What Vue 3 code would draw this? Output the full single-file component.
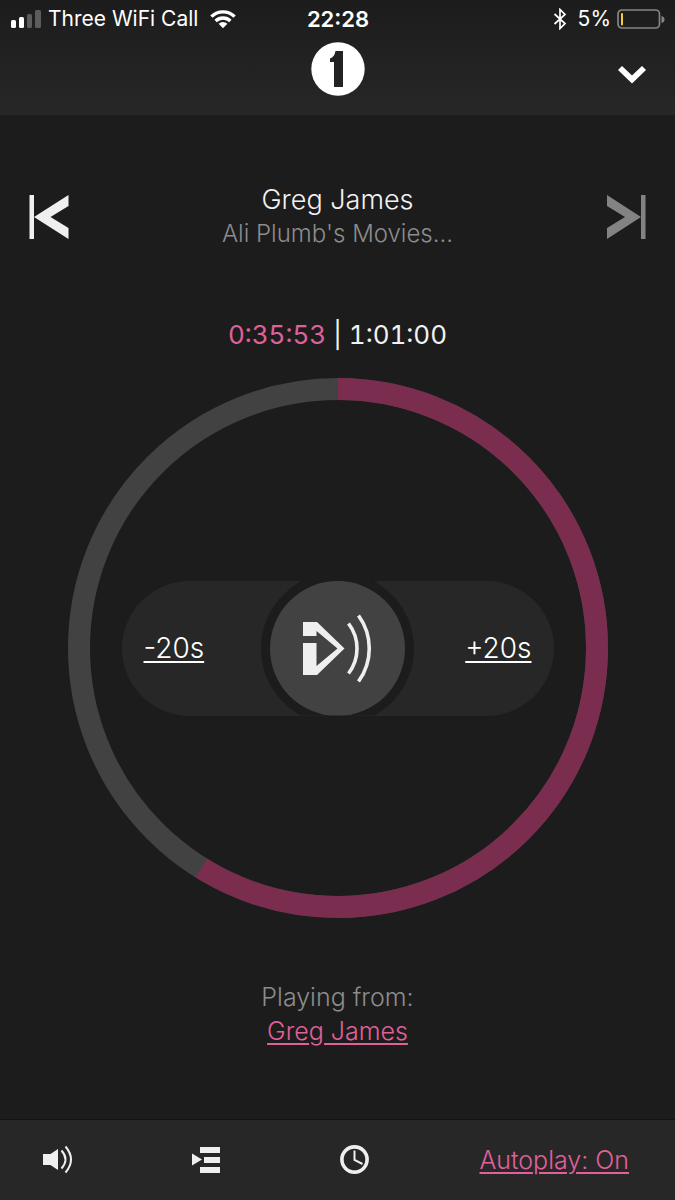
<script setup>
import { ref, computed } from 'vue'

const elapsed = ref(35 * 60 + 53)
const duration = ref(61 * 60)
const autoplay = ref(true)

const format = (t) => {
  const pad = (n) => String(n).padStart(2, '0')
  return `${Math.floor(t / 3600)}:${pad(Math.floor(t / 60) % 60)}:${pad(t % 60)}`
}
const radius = 259
const circumference = 2 * Math.PI * radius
const dash = computed(() => `${(circumference * elapsed.value) / duration.value} ${circumference}`)
const skip = (s) => {
  elapsed.value = Math.min(duration.value, Math.max(0, elapsed.value + s))
}
</script>

<template>
  <div class="player">
    <header class="top">
      <div class="status">
        <div class="status-left">
          <svg class="signal" viewBox="0 0 30 20" aria-hidden="true">
            <rect x="0" y="11" width="5" height="8" rx="1.5" fill="#fff" />
            <rect x="8" y="8" width="5" height="11" rx="1.5" fill="#fff" />
            <rect x="16" y="5" width="5" height="14" rx="1.5" fill="#5c5c5c" />
            <rect x="24" y="1" width="6" height="18" rx="1.5" fill="#5c5c5c" />
          </svg>
          <span>Three WiFi Call</span>
          <svg class="wifi" viewBox="0 0 26 20" aria-hidden="true">
            <g fill="none" stroke="#fff" stroke-width="3.4">
              <path d="M1.4 7.6a16.6 16.6 0 0 1 23.2 0" />
              <path d="M5.6 12a10.6 10.6 0 0 1 14.8 0" />
            </g>
            <path d="M8.6 14.8a6.2 6.2 0 0 1 8.8 0L13 19.2z" fill="#fff" />
          </svg>
        </div>
        <time class="clock">22:28</time>
        <div class="status-right">
          <svg class="bluetooth" viewBox="0 0 14 22" aria-hidden="true">
            <path d="M1.5 6 12 15.5 7 20.500V1.500L12 6.500 1.500 16" fill="none" stroke="#fff" stroke-width="1.7" />
          </svg>
          <span>5%</span>
          <svg class="battery" viewBox="0 0 48 20" aria-hidden="true">
            <rect x="1" y="1" width="41.500" height="18" rx="4" fill="none" stroke="#858585" stroke-width="1.7" />
            <path d="M44.500 7q3 1 3 3.500t-3 3.500z" fill="#858585" />
            <rect x="4" y="4" width="2" height="12.500" rx="1" fill="#f7cb3b" />
          </svg>
        </div>
      </div>
      <div class="brand">
        <svg class="logo" viewBox="0 0 54 54" role="img" aria-label="Radio station logo">
          <circle cx="27" cy="27" r="26.700" fill="#fff" />
          <path d="M24.500 9h7.500v36h-9V20h-4v-3.500q4.500-1.500 5.500-7.500z" fill="#232323" />
        </svg>
        <button class="collapse" type="button" aria-label="Close player">
          <svg viewBox="0 0 28 18" aria-hidden="true">
            <path d="M0 4 4 0 14 9.500 24 0 28 4 14 17.500z" fill="#fff" />
          </svg>
        </button>
      </div>
    </header>

    <main class="content">
      <section class="track">
        <button class="step" type="button" aria-label="Previous">
          <svg viewBox="0 0 40 44" aria-hidden="true">
            <path d="M.5 0H5v44H.500zM5 22 39.500 0v11L21.500 22 39.500 33v11z" fill="#efefef" />
          </svg>
        </button>
        <div class="titles">
          <h1>Greg James</h1>
          <p>Ali Plumb's Movies...</p>
        </div>
        <button class="step" type="button" aria-label="Next">
          <svg viewBox="0 0 40 44" aria-hidden="true">
            <path d="M39.500 0H35v44h4.500zM35 22 1 0v11l18 11L1 33v11z" fill="#838383" />
          </svg>
        </button>
      </section>

      <p class="times"><span class="elapsed">{{ format(elapsed) }}</span> | {{ format(duration) }}</p>

      <section class="dial">
        <svg class="ring" viewBox="0 0 540 540" aria-hidden="true">
          <g fill="none" stroke-width="22" transform="rotate(-90 270 270)">
            <circle cx="270" cy="270" :r="radius" stroke="#424242" />
            <circle cx="270" cy="270" :r="radius" stroke="#7a2d4e" :stroke-dasharray="dash" />
          </g>
        </svg>
        <div class="controls">
          <button class="skip" type="button" @click="skip(-20)">-20s</button>
          <button class="play" type="button" aria-label="Play">
            <svg viewBox="0 0 135 135" aria-hidden="true">
              <path d="M33 41H47L74.500 67.500 47 94H33V62H46.500V85L67.500 67.500 46.500 50V55H33Z" fill="#efefef" />
              <g fill="none" stroke="#efefef" stroke-width="3.600">
                <path d="M78.500 42.500A41 41 0 0 1 78.500 92.500" />
                <path d="M88.500 34.500A56 56 0 0 1 88.500 100.500" />
              </g>
            </svg>
          </button>
          <button class="skip forward" type="button" @click="skip(20)">+20s</button>
        </div>
      </section>

      <section class="source">
        <p>Playing from:</p>
        <a href="#greg-james">Greg James</a>
      </section>
    </main>

    <footer class="bottom">
      <button class="tool" type="button" aria-label="Volume">
        <svg viewBox="0 0 30 30" aria-hidden="true">
          <path d="M0 9h7.500L15 4v21L7.500 20H0z" fill="#efefef" />
          <g fill="none" stroke="#efefef" stroke-width="2">
            <path d="M18.500 5.500Q26.500 14.500 18.500 23.500" />
            <path d="M22.500 1.500Q33.500 14.500 22.500 27.500" />
          </g>
        </svg>
      </button>
      <button class="tool" type="button" aria-label="Queue">
        <svg viewBox="0 0 30 30" aria-hidden="true">
          <path d="M1 8.500 11 14.500 1 20.500zM9 2h20v6H9zM13 12h16v6H13zM9 22h20v6H9z" fill="#efefef" />
        </svg>
      </button>
      <button class="tool" type="button" aria-label="Sleep timer">
        <svg viewBox="0 0 30 30" aria-hidden="true">
          <circle cx="14.500" cy="14.500" r="12.600" fill="none" stroke="#efefef" stroke-width="3.600" />
          <path d="M14.500 5.500v9.500l8 4" fill="none" stroke="#efefef" stroke-width="2" />
        </svg>
      </button>
      <button class="autoplay" type="button" @click="autoplay = !autoplay">Autoplay: {{ autoplay ? 'On' : 'Off' }}</button>
    </footer>
  </div>
</template>

<style>
html,
body {
  background: #1c1c1c;
}
</style>

<style scoped>
.player {
  display: flex;
  flex-direction: column;
  min-height: 100vh;
  background: #1c1c1c;
  color: #f2f2f2;
  font-family: Inter, "Liberation Sans", sans-serif;
  font-size: 25px;
  font-weight: 300;
  line-height: 34px;
}
h1,
p {
  margin: 0;
  font-size: inherit;
  font-weight: inherit;
}
button {
  padding: 0;
  border: 0;
  background: none;
  color: inherit;
  font: inherit;
  cursor: pointer;
}
svg {
  display: block;
}
.top {
  height: 115px;
  background: linear-gradient(#1c1c1c, #272727);
}
.status {
  display: grid;
  grid-template-columns: 1fr auto 1fr;
  align-items: center;
  height: 37px;
  padding: 0 10px 0 11px;
  color: #fff;
  font-size: 21px;
  font-weight: 400;
}
.status-left,
.status-right {
  display: flex;
  align-items: center;
}
.status-left {
  gap: 7px;
}
.status-right {
  justify-content: flex-end;
  gap: 6px;
}
.signal {
  width: 30px;
  height: 20px;
}
.wifi {
  width: 26px;
  height: 20px;
  margin-left: 5px;
}
.clock {
  font-size: 22px;
  font-weight: 600;
}
.bluetooth {
  width: 14px;
  height: 22px;
  margin-right: 5px;
}
.battery {
  width: 48px;
  height: 20px;
}
.brand {
  display: grid;
  grid-template-columns: 1fr auto 1fr;
  align-items: center;
  padding: 5px 29px 0;
}
.logo {
  grid-column: 2;
  width: 54px;
  height: 54px;
}
.collapse {
  justify-self: end;
  margin-top: 12px;
}
.collapse svg {
  width: 28px;
  height: 18px;
}
.content {
  flex: 1;
  padding: 68px 0 72px;
}
.track {
  display: flex;
  align-items: center;
  justify-content: space-between;
  padding: 0 29px;
  text-align: center;
}
.step svg {
  width: 40px;
  height: 44px;
}
.titles h1 {
  font-size: 27px;
}
.titles p {
  font-size: 24px;
}
.titles p,
.source p {
  color: #8c8c8c;
}
.times {
  margin-top: 67px;
  text-align: center;
  font-size: 26px;
  font-weight: 400;
  font-variant-numeric: tabular-nums;
}
.elapsed {
  color: #e0609a;
}
.dial {
  display: grid;
  place-items: center;
  width: 80%;
  margin: 26px auto 0;
}
.ring {
  grid-area: 1 / 1;
  width: 100%;
}
.controls {
  grid-area: 1 / 1;
  display: flex;
  align-items: center;
  justify-content: space-between;
  width: 80%;
  border-radius: 80px;
  background: #272727;
}
.skip {
  flex: 1;
  padding-left: 22px;
  text-align: left;
  color: #fff;
  font-size: 28px;
  text-decoration: underline;
  text-decoration-thickness: 2px;
  text-underline-offset: 3px;
  text-decoration-skip-ink: none;
}
.skip.forward {
  padding: 0 22px 0 0;
  text-align: right;
}
.play {
  width: 31.25%;
  border-radius: 50%;
  background: #424242;
  box-shadow: 0 0 0 9px #1c1c1c;
  clip-path: inset(0 -9px);
}
.play svg {
  width: 100%;
}
.source {
  margin-top: 62px;
  text-align: center;
}
.source a,
.autoplay {
  color: #e0609a;
  text-decoration: underline;
  text-decoration-thickness: 2px;
  text-underline-offset: 3px;
}
.bottom {
  display: grid;
  grid-template-columns: 34fr 34fr 32fr auto;
  align-items: center;
  height: 80px;
  padding: 0 46px 0 43px;
  box-sizing: border-box;
  background: #272727;
  box-shadow: 0 -1px #141414;
}
.tool svg {
  width: 30px;
  height: 30px;
}
.autoplay {
  white-space: nowrap;
}
</style>
